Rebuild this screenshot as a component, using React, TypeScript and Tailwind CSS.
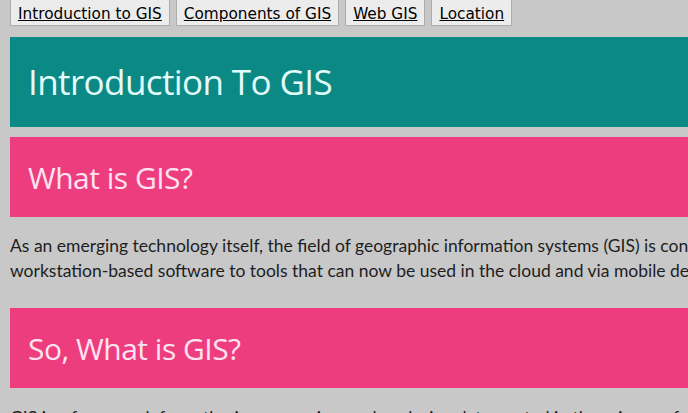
const navItems = ['Introduction to GIS', 'Components of GIS', 'Web GIS', 'Location'];

export default function App() {
  return (
    <div className="w-[688px] h-[413px] overflow-hidden bg-[#c8c8c8]">
      <div className="w-[1200px] px-[10px]">
        <nav className="flex gap-[6px] h-[26px]">
          {navItems.map(item => (
            <a
              key={item}
              href="#"
              className="h-[28px] -mt-[2px] pt-[5px] px-[7px] flex items-center bg-[#ececec] border border-[#adadad] text-black underline text-[15.3px] font-['DejaVu_Sans',sans-serif]"
            >
              {item}
            </a>
          ))}
        </nav>

        <div className="mt-[11px] h-[90px] bg-[#0b8985] flex items-center px-[18px]">
          <h1 className="text-[35px] text-[#e4fbfb] font-['Open_Sans',sans-serif] tracking-[-0.6px]">Introduction To GIS</h1>
        </div>

        <div className="mt-[10px] h-[80px] bg-[#ee3d7e] flex items-center px-[18px]">
          <h2 className="text-[30px] text-[#fde3ef] font-['Open_Sans',sans-serif] tracking-[-0.5px]">What is GIS?</h2>
        </div>

        <p className="mt-[16px] mb-[25px] text-[17.5px] leading-[25px] text-[#1e1e1e] font-['Lato',sans-serif]">
          As an emerging technology itself, the field of geographic information systems (GIS) is constantly evolving and has moved from desktop and
          <br />
          workstation-based software to tools that can now be used in the cloud and via mobile devices, bringing maps to everyone.
        </p>

        <div className="h-[80px] bg-[#ee3d7e] flex items-center px-[18px]">
          <h2 className="text-[30px] text-[#fde3ef] font-['Open_Sans',sans-serif] tracking-[-0.5px]">So, What is GIS?</h2>
        </div>

        <p className="mt-[17px] text-[17.5px] leading-[25px] text-[#1e1e1e] font-['Lato',sans-serif]">
          GIS is a framework for gathering, managing, and analyzing data, rooted in the science of geography.
        </p>
      </div>
    </div>
  );
}
